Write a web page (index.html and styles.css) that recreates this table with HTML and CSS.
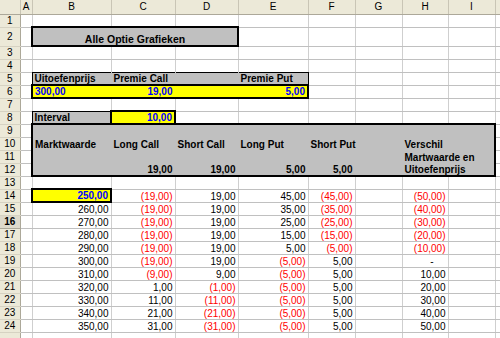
FILE: index.html
```html
<!DOCTYPE html>
<html lang="nl">
<head>
    <meta charset="UTF-8">
    <title>Alle Optie Grafieken</title>
    <link rel="stylesheet" href="styles.css">
</head>
<body>

    <table class="sheet">
        <colgroup>
            <col class="c-rh">
            <col class="c-a">
            <col class="c-b">
            <col class="c-c">
            <col class="c-d">
            <col class="c-e">
            <col class="c-f">
            <col class="c-g">
            <col class="c-h">
            <col class="c-i">
            <col class="c-j">
        </colgroup>

        <!-- column headers -->
        <tr class="head">
            <th class="corner"></th>
            <th>A</th><th>B</th><th>C</th><th>D</th><th>E</th><th>F</th><th>G</th><th>H</th><th>I</th><th></th>
        </tr>

        <tr><th class="rh">1</th><td></td><td></td><td></td><td></td><td></td><td></td><td></td><td></td><td></td><td></td></tr>

        <tr class="tall">
            <th class="rh">2</th><td></td>
            <td colspan="3" class="title">Alle Optie Grafieken</td>
            <td></td><td></td><td></td><td></td><td></td><td></td>
        </tr>

        <tr><th class="rh">3</th><td></td><td></td><td></td><td></td><td></td><td></td><td></td><td></td><td></td><td></td></tr>
        <tr><th class="rh">4</th><td></td><td></td><td></td><td></td><td></td><td></td><td></td><td></td><td></td><td></td></tr>

        <!-- strike and premiums -->
        <tr>
            <th class="rh">5</th><td></td>
            <td class="g tt tl b">Uitoefenprijs</td>
            <td class="g tt b">Premie Call</td>
            <td class="g tt"></td>
            <td class="g tt tr b put">Premie Put</td>
            <td></td><td></td><td></td><td></td><td></td>
        </tr>
        <tr>
            <th class="rh">6</th><td></td>
            <td class="y bt bb bl blue">300,00</td>
            <td class="y bt bb blue num tight">19,00</td>
            <td class="y bt bb"></td>
            <td class="y bt bb br blue num">5,00</td>
            <td></td><td></td><td></td><td></td><td></td>
        </tr>

        <tr><th class="rh">7</th><td></td><td></td><td></td><td></td><td></td><td></td><td></td><td></td><td></td><td></td></tr>

        <tr>
            <th class="rh">8</th><td></td>
            <td class="g tt tl tb b">Interval</td>
            <td class="y bt bb bl br blue num">10,00</td>
            <td></td><td></td><td></td><td></td><td></td><td></td><td></td>
        </tr>

        <!-- table header block -->
        <tr>
            <th class="rh">9</th><td></td>
            <td class="g bt bl"></td><td class="g bt"></td><td class="g bt"></td><td class="g bt"></td>
            <td class="g bt"></td><td class="g bt"></td><td class="g bt"></td><td class="g bt br"></td>
            <td></td>
        </tr>
        <tr>
            <th class="rh">10</th><td></td>
            <td class="g bl b lbl">Marktwaarde</td>
            <td class="g b lbl">Long Call</td>
            <td class="g b lbl">Short Call</td>
            <td class="g b lbl">Long Put</td>
            <td class="g b lbl">Short Put</td>
            <td class="g"></td>
            <td class="g b lbl">Verschil</td>
            <td class="g br"></td>
            <td></td>
        </tr>
        <tr>
            <th class="rh">11</th><td></td>
            <td class="g bl"></td><td class="g"></td><td class="g"></td><td class="g"></td>
            <td class="g"></td><td class="g"></td>
            <td class="g b lbl">Martwaarde en</td>
            <td class="g br"></td>
            <td></td>
        </tr>
        <tr>
            <th class="rh">12</th><td></td>
            <td class="g bl bb"></td>
            <td class="g bb b num">19,00</td>
            <td class="g bb b num">19,00</td>
            <td class="g bb b num">5,00</td>
            <td class="g bb b num">5,00</td>
            <td class="g bb"></td>
            <td class="g bb b lbl">Uitoefenprijs</td>
            <td class="g bb br"></td>
            <td></td>
        </tr>

        <tr><th class="rh">13</th><td></td><td></td><td></td><td></td><td></td><td></td><td></td><td></td><td></td><td></td></tr>

        <!-- results -->
        <tr>
            <th class="rh">14</th><td></td>
            <td class="y bt bb bl br blue num">250,00</td>
            <td class="num neg">(19,00)</td><td class="num">19,00</td><td class="num">45,00</td><td class="num neg">(45,00)</td>
            <td></td><td class="num neg">(50,00)</td><td></td><td></td>
        </tr>
        <tr>
            <th class="rh">15</th><td></td>
            <td class="num">260,00</td>
            <td class="num neg">(19,00)</td><td class="num">19,00</td><td class="num">35,00</td><td class="num neg">(35,00)</td>
            <td></td><td class="num neg">(40,00)</td><td></td><td></td>
        </tr>
        <tr>
            <th class="rh active">16</th><td></td>
            <td class="num">270,00</td>
            <td class="num neg">(19,00)</td><td class="num">19,00</td><td class="num">25,00</td><td class="num neg">(25,00)</td>
            <td></td><td class="num neg">(30,00)</td><td></td><td></td>
        </tr>
        <tr>
            <th class="rh">17</th><td></td>
            <td class="num">280,00</td>
            <td class="num neg">(19,00)</td><td class="num">19,00</td><td class="num">15,00</td><td class="num neg">(15,00)</td>
            <td></td><td class="num neg">(20,00)</td><td></td><td></td>
        </tr>
        <tr>
            <th class="rh">18</th><td></td>
            <td class="num">290,00</td>
            <td class="num neg">(19,00)</td><td class="num">19,00</td><td class="num">5,00</td><td class="num neg">(5,00)</td>
            <td></td><td class="num neg">(10,00)</td><td></td><td></td>
        </tr>
        <tr>
            <th class="rh">19</th><td></td>
            <td class="num">300,00</td>
            <td class="num neg">(19,00)</td><td class="num">19,00</td><td class="num neg">(5,00)</td><td class="num">5,00</td>
            <td></td><td class="num dash">-</td><td></td><td></td>
        </tr>
        <tr>
            <th class="rh">20</th><td></td>
            <td class="num">310,00</td>
            <td class="num neg">(9,00)</td><td class="num">9,00</td><td class="num neg">(5,00)</td><td class="num">5,00</td>
            <td></td><td class="num">10,00</td><td></td><td></td>
        </tr>
        <tr>
            <th class="rh">21</th><td></td>
            <td class="num">320,00</td>
            <td class="num">1,00</td><td class="num neg">(1,00)</td><td class="num neg">(5,00)</td><td class="num">5,00</td>
            <td></td><td class="num">20,00</td><td></td><td></td>
        </tr>
        <tr>
            <th class="rh">22</th><td></td>
            <td class="num">330,00</td>
            <td class="num">11,00</td><td class="num neg">(11,00)</td><td class="num neg">(5,00)</td><td class="num">5,00</td>
            <td></td><td class="num">30,00</td><td></td><td></td>
        </tr>
        <tr>
            <th class="rh">23</th><td></td>
            <td class="num">340,00</td>
            <td class="num">21,00</td><td class="num neg">(21,00)</td><td class="num neg">(5,00)</td><td class="num">5,00</td>
            <td></td><td class="num">40,00</td><td></td><td></td>
        </tr>
        <tr>
            <th class="rh">24</th><td></td>
            <td class="num">350,00</td>
            <td class="num">31,00</td><td class="num neg">(31,00)</td><td class="num neg">(5,00)</td><td class="num">5,00</td>
            <td></td><td class="num">50,00</td><td></td><td></td>
        </tr>

        <tr><th class="rh"></th><td></td><td></td><td></td><td></td><td></td><td></td><td></td><td></td><td></td><td></td></tr>
    </table>

</body>
</html>
```

FILE: styles.css
```css
* {
    margin: 0;
    padding: 0;
    box-sizing: border-box;
}

body {
    font-family: 'Liberation Sans', Arial, sans-serif;
    font-size: 10px;
    color: #000;
    background: #fff;
    overflow: hidden;
}

/* Sheet grid: gridlines live on the columns and rows, so any cell border wins */
.sheet {
    border-collapse: collapse;
    table-layout: fixed;
    width: 500px;
}

.sheet col {
    border-right: 1px solid #cfcfcf;
}

.c-rh { width: 20px; }
.c-a  { width: 12px; }
.c-b  { width: 79px; }
.c-c  { width: 64px; }
.c-d  { width: 63px; }
.c-e  { width: 70px; }
.c-f  { width: 47px; }
.c-g  { width: 47px; }
.c-h  { width: 46px; }
.c-i  { width: 47px; }
.c-j  { width: 5px; }

.sheet tr {
    height: 13px;
    border-bottom: 1px solid #c0c0c0;
}

.sheet tr.head {
    height: 14px;
}

.sheet tr.tall {
    height: 19px;
}

.sheet td {
    padding: 0 2px;
    line-height: 11px;
    white-space: nowrap;
    vertical-align: bottom;
}

/* Column and row headers */
.head th {
    background: #ece9d8;
    font-weight: normal;
    text-align: center;
    vertical-align: middle;
    line-height: 12px;
    border-right: 1px solid #c9c5b5;
    border-bottom: 1px solid #aca899;
}

.rh {
    background: #ece9d8;
    font-weight: normal;
    text-align: center;
    vertical-align: middle;
    line-height: 11px;
    border-right: 1px solid #aca899;
    border-bottom: 1px solid #d6d2c2;
}

.rh.active {
    background: #dedacb;
    font-weight: bold;
    border-bottom: 1px solid #aca899;
}

/* Fills (their own border colour hides the gridlines) */
.g {
    background: #c0c0c0;
    border: 1px solid #c0c0c0;
}

.y {
    background: #ffff00;
    border: 1px solid #ffff00;
}

.title {
    background: #c0c0c0;
    border: 2px solid #000;
    font-size: 10.5px;
    font-weight: bold;
    text-align: center;
    vertical-align: middle;
}

/* Frames */
.tt { border-top: 1px solid #000; }
.tb { border-bottom: 1px solid #000; }
.tl { border-left: 1px solid #000; }
.tr { border-right: 1px solid #000; }

.bt { border-top: 2px solid #000; }
.bb { border-bottom: 2px solid #000; }
.bl { border-left: 2px solid #000; }
.br { border-right: 2px solid #000; }

/* Text */
.b {
    font-weight: bold;
}

.blue {
    color: #0000ff;
    font-weight: bold;
}

.lbl {
    padding-left: 6px;
}

.put {
    padding-left: 8px;
}

.num {
    text-align: right;
    padding-right: 6px;
}

.num.tight {
    padding-right: 2px;
}

.num.neg {
    color: #ff0000;
    padding-right: 2px;
}

.num.dash {
    padding-right: 14px;
}
```
